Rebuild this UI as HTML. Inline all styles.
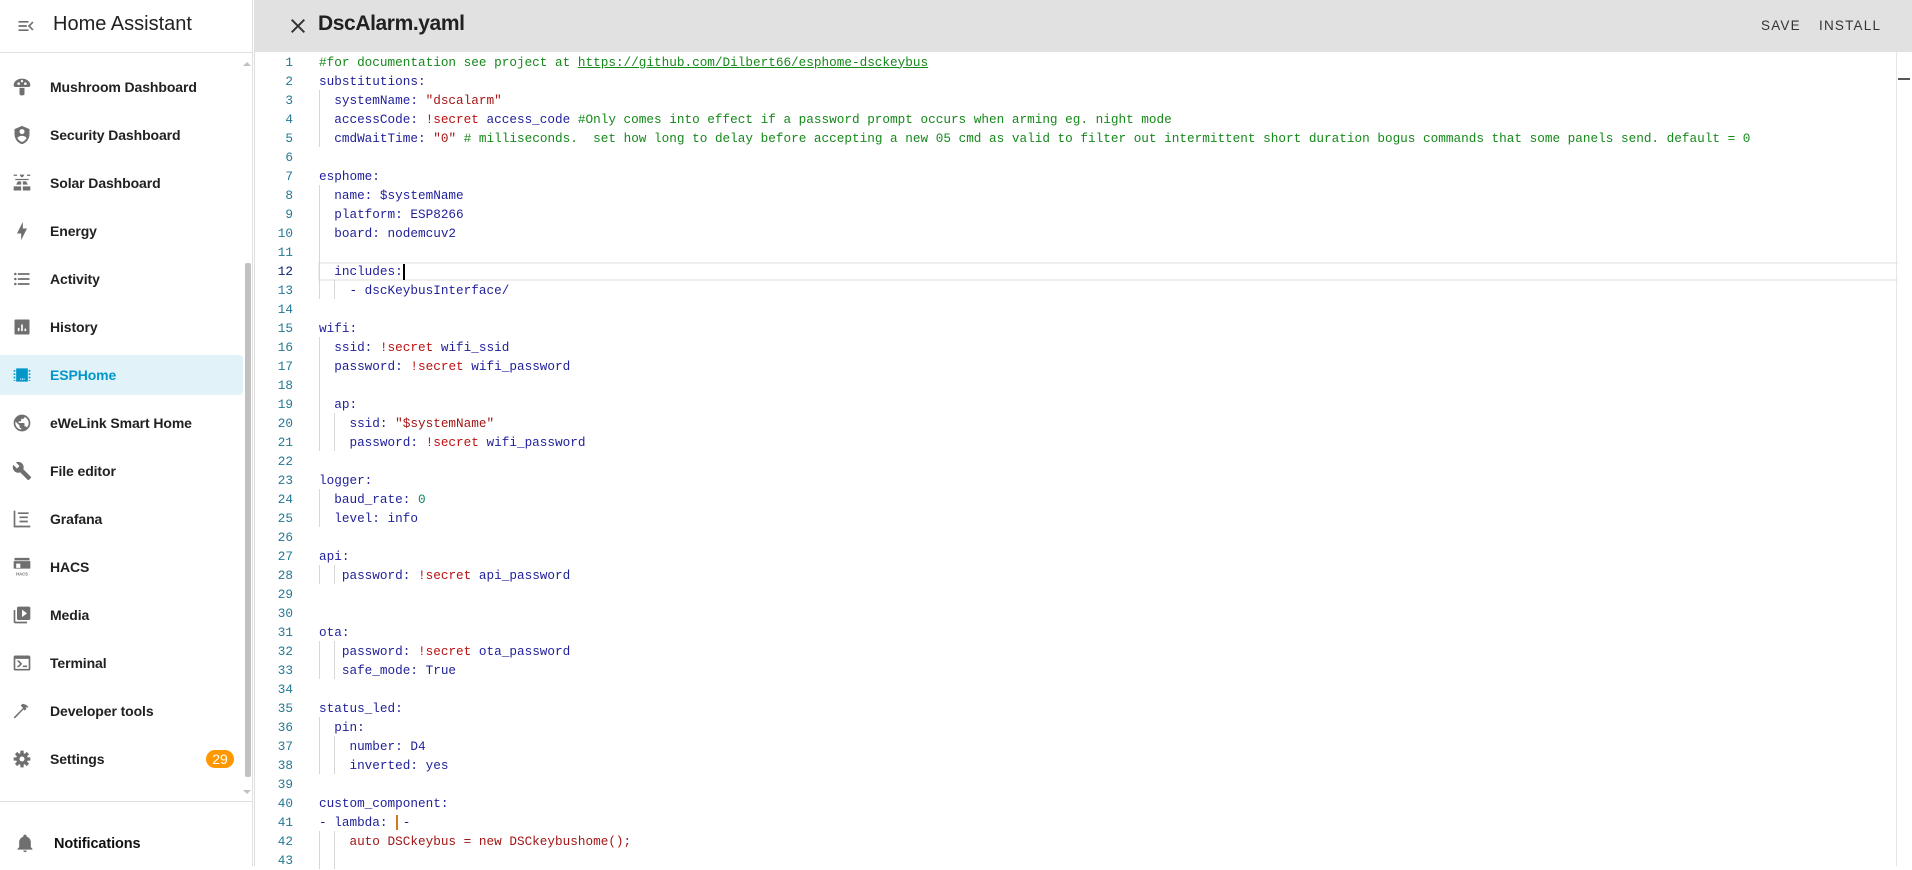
<!DOCTYPE html>
<html><head><meta charset="utf-8"><style>
*{box-sizing:border-box;margin:0;padding:0}
body{width:1912px;height:866px;overflow:hidden;background:#fff;font-family:"Liberation Sans",Arial,sans-serif;position:relative}
#sb{position:absolute;left:0;top:0;width:253px;height:866px;border-right:1px solid #e0e0e0;background:#fff}
#sbh{height:53px;border-bottom:1px solid #e0e0e0;position:relative}
#sbh .t{position:absolute;left:53px;top:13px;font-size:20px;color:#212121}
.it{position:absolute;left:0;width:243px;height:40px;font-size:14px;font-weight:bold;color:#212121}
.it svg{position:absolute;left:12px;top:10px;width:20px;height:20px;fill:#6f6f6f}
.it span{position:absolute;left:50px;top:12px;letter-spacing:-0.1px}
.act{background:#e1f2f8;color:#0397c9;border-radius:0 4px 4px 0}
.act svg{fill:#0397c9}
.badge{position:absolute;left:206px;top:11px;width:28px;height:18px;border-radius:9px;background:#ff9800;color:#fff;font-size:14px;font-weight:normal;text-align:center;line-height:18px}
#hdr{position:absolute;left:254px;top:0;width:1658px;height:52px;background:#e1e1e1}
#hdr .x{position:absolute;left:32px;top:14px;width:24px;height:24px}
#hdr .ti{position:absolute;left:64px;top:12px;font-size:21px;font-weight:bold;color:#212121;letter-spacing:-0.4px}
#hdr .b{position:absolute;top:18px;font-size:13.5px;letter-spacing:1.2px;color:#333;font-weight:500}
#ed{position:absolute;left:254px;top:52px;width:1658px;height:814px;font-family:"Liberation Mono",monospace;font-size:12.7px;border-left:1px solid #ddd}
.ln{position:absolute;left:0;width:284px;height:19px;line-height:19px}
.n{position:absolute;width:40px;text-align:right;color:#237893;left:-2px}
.c{position:absolute;left:64px;white-space:pre;color:#1f1f9a}
.g{position:absolute;width:1px;background:#d6d6d6}
.k{color:#1f1f9a}.s{color:#a31515}.r{color:#b11}.cm{color:#15891a}.nm{color:#098658}
a{color:#15891a;text-decoration:underline}
</style></head><body>
<div id="sb">
 <div id="sbh">
  <svg style="position:absolute;left:16px;top:16px" width="20" height="20" viewBox="0 0 24 24"><path fill="#6f6f6f" d="M3 6h12v2H3zM3 11h10v2H3zM3 16h12v2H3zM21 8l-4 4 4 4-1.4 1.4L14.2 12l5.4-5.4z"/></svg>
  <div class="t">Home Assistant</div>
 </div>
 <div style="position:absolute;left:243px;top:58px;width:0;height:0;border:4px solid transparent;border-bottom-color:#c1c1c1"></div>
 <div style="position:absolute;left:245px;top:263px;width:6px;height:514px;background:#c1c1c1;border-radius:2px"></div>
 <div style="position:absolute;left:243px;top:790px;width:0;height:0;border:4px solid transparent;border-top-color:#c1c1c1"></div>

 <div class="it" style="top:67px"><svg viewBox="0 0 24 24"><path d="M12 2C6.5 2 2 5.5 2 10c0 1.1.9 2 2 2h16c1.1 0 2-.9 2-2 0-4.5-4.5-8-10-8zM9 13h6v7a2 2 0 0 1-2 2h-2a2 2 0 0 1-2-2z"/><circle cx="8" cy="8" r="1.6" fill="#fff"/><circle cx="16" cy="8" r="1.6" fill="#fff"/><circle cx="12" cy="5" r="1.4" fill="#fff"/></svg><span>Mushroom Dashboard</span></div>
 <div class="it" style="top:115px"><svg viewBox="0 0 24 24"><path d="M12 1L3 5v6c0 5.5 3.8 10.7 9 12 5.2-1.3 9-6.5 9-12V5zm0 4a3 3 0 1 1 0 6 3 3 0 0 1 0-6zm0 8c2.5 0 5 1.2 5.5 2.8C16.3 18 14.3 19.7 12 20.4 9.7 19.7 7.7 18 6.5 15.8 7 14.2 9.5 13 12 13z"/></svg><span>Security Dashboard</span></div>
 <div class="it" style="top:163px"><svg viewBox="0 0 24 24"><path d="M2 2h4v1.5H2zM18 2h4v1.5h-4zM9 2h6l-2 3h-2zM4 7h16v1.5H4zM7 10h4v4H5zM13 10h4l2 4h-6zM2 16h9v5H2zM13 16h9v5h-9z"/></svg><span>Solar Dashboard</span></div>
 <div class="it" style="top:211px"><svg viewBox="0 0 24 24"><path d="M11 15H6L13 1V9H18L11 23V15Z"/></svg><span>Energy</span></div>
 <div class="it" style="top:259px"><svg viewBox="0 0 24 24"><path d="M7,5H21V7H7V5M7,13V11H21V13H7M4,4.5A1.5,1.5 0 0,1 5.5,6A1.5,1.5 0 0,1 4,7.5A1.5,1.5 0 0,1 2.5,6A1.5,1.5 0 0,1 4,4.5M4,10.5A1.5,1.5 0 0,1 5.5,12A1.5,1.5 0 0,1 4,13.5A1.5,1.5 0 0,1 2.5,12A1.5,1.5 0 0,1 4,10.5M7,19V17H21V19H7M4,16.5A1.5,1.5 0 0,1 5.5,18A1.5,1.5 0 0,1 4,19.5A1.5,1.5 0 0,1 2.5,18A1.5,1.5 0 0,1 4,16.5Z"/></svg><span>Activity</span></div>
 <div class="it" style="top:307px"><svg viewBox="0 0 24 24"><path d="M4 3h16a1 1 0 0 1 1 1v16a1 1 0 0 1-1 1H4a1 1 0 0 1-1-1V4a1 1 0 0 1 1-1zm3 10v4h2v-4zm4-4v8h2V9zm4 5v3h2v-3z"/></svg><span>History</span></div>
 <div class="it act" style="top:355px"><svg viewBox="0 0 24 24"><path d="M5 4h14v16H5zM2 6h2v2H2zM2 10h2v2H2zM2 14h2v2H2zM2 18h2v1H2zM20 6h2v2h-2zM20 10h2v2h-2zM20 14h2v2h-2zM20 18h2v1h-2z"/><path fill="#e1f2f8" d="M10 16h1v2h-1zM12 16h1v2h-1zM14 16h1v2h-1z"/></svg><span>ESPHome</span></div>
 <div class="it" style="top:403px"><svg viewBox="0 0 24 24"><path d="M12 2a10 10 0 1 0 0 20 10 10 0 0 0 0-20zm-1 17.9A8 8 0 0 1 4.2 10.2L9 15v1a2 2 0 0 0 2 2zm6.9-2.5A2 2 0 0 0 16 16h-1v-3a1 1 0 0 0-1-1H8v-2h2a1 1 0 0 0 1-1V7h2a2 2 0 0 0 2-2v-.4a8 8 0 0 1 2.9 12.8z"/></svg><span>eWeLink Smart Home</span></div>
 <div class="it" style="top:451px"><svg viewBox="0 0 24 24"><path d="M22.7 19l-9.1-9.1c.9-2.3.4-5-1.5-6.9-2-2-5-2.4-7.4-1.3L9 6 6 9 1.6 4.7C.4 7.1.9 10.1 2.9 12.1c1.9 1.9 4.6 2.4 6.9 1.5l9.1 9.1c.4.4 1 .4 1.4 0l2.3-2.3c.5-.4.5-1.1.1-1.4z"/></svg><span>File editor</span></div>
 <div class="it" style="top:499px"><svg viewBox="0 0 24 24"><path d="M2 2h2v18h18v2H2zM7 4h13v2H7zM9 9h10v2H9zM9 14h10v2H9z"/></svg><span>Grafana</span></div>
 <div class="it" style="top:547px"><svg viewBox="0 0 24 24"><path d="M3 1h18v3H3zM2 5h20v9H2zM5 8v5h5V8z"/><text x="12" y="22" font-size="5" text-anchor="middle" fill="#6f6f6f" font-family="Liberation Sans">HACS</text></svg><span>HACS</span></div>
 <div class="it" style="top:595px"><svg viewBox="0 0 24 24"><path d="M4 6H2v14a2 2 0 0 0 2 2h14v-2H4zm16-4H8a2 2 0 0 0-2 2v12a2 2 0 0 0 2 2h12a2 2 0 0 0 2-2V4a2 2 0 0 0-2-2zm-8 12.5v-9l6 4.5z"/></svg><span>Media</span></div>
 <div class="it" style="top:643px"><svg viewBox="0 0 24 24"><path d="M20 19V7H4v12zm0-16a2 2 0 0 1 2 2v14a2 2 0 0 1-2 2H4a2 2 0 0 1-2-2V5a2 2 0 0 1 2-2zm-7 14v-2h5v2zm-3.4-4L5.6 9H8.4l3.3 3.3c.4.4.4 1 0 1.4L8.4 17H5.6z"/></svg><span>Terminal</span></div>
 <div class="it" style="top:691px"><svg viewBox="0 0 24 24"><path d="M2 19.6L13.2 8.4l-2.8-2.8L12.5 3.5c2.5 0 5.5 1.5 7.5 4L16 8l1.4 1.4-2.1 2.1-1.4-1.4L3.4 21z"/></svg><span>Developer tools</span></div>
 <div class="it" style="top:739px"><svg viewBox="0 0 24 24"><circle cx="12" cy="12" r="7"/><g stroke="#6f6f6f" stroke-width="4"><path d="M12 2v20M2 12h20M4.9 4.9l14.2 14.2M19.1 4.9L4.9 19.1"/></g><circle cx="12" cy="12" r="3" fill="#fff"/></svg><span>Settings</span><div class="badge">29</div></div>
 <div style="position:absolute;left:0;top:801px;width:253px;height:1px;background:#e0e0e0"></div>
 <div class="it" style="top:823px"><svg viewBox="0 0 24 24" style="left:15px"><path d="M21,19V20H3V19L5,17V11C5,7.9 7.03,5.17 10,4.29C10,4.19 10,4.1 10,4A2,2 0 0,1 12,2A2,2 0 0,1 14,4C14,4.1 14,4.19 14,4.29C16.97,5.17 19,7.9 19,11V17L21,19M14,21A2,2 0 0,1 12,23A2,2 0 0,1 10,21"/></svg><span style="left:54px;font-size:14.5px;top:13px;color:#111">Notifications</span></div>
</div>

<div id="hdr">
 <svg class="x" viewBox="0 0 24 24"><path fill="#333" d="M19,6.41L17.59,5L12,10.59L6.41,5L5,6.41L10.59,12L5,17.59L6.41,19L12,13.41L17.59,19L19,17.59L13.41,12L19,6.41Z"/></svg>
 <div class="ti">DscAlarm.yaml</div>
 <div class="b" style="left:1507px">SAVE</div>
 <div class="b" style="left:1565px">INSTALL</div>
</div>

<div id="ed">
 <div style="position:absolute;left:63px;top:210px;width:1580px;height:19px;border:2px solid #eee;border-right:none"></div>
 <div style="position:absolute;left:1641px;top:0;width:1px;height:814px;background:#e6e6e6"></div>
 <div style="position:absolute;left:1643px;top:26px;width:12px;height:2px;background:#555"></div>
 <div style="position:absolute;left:148px;top:212px;width:2px;height:16px;background:#000"></div>
 <!-- guides -->
 <div class="g" style="left:64px;top:38px;height:57px"></div>
 <div class="g" style="left:64px;top:133px;height:114px"></div>
 <div class="g" style="left:79px;top:228px;height:19px"></div>
 <div class="g" style="left:64px;top:285px;height:114px"></div>
 <div class="g" style="left:79px;top:361px;height:38px"></div>
 <div class="g" style="left:64px;top:437px;height:38px"></div>
 <div class="g" style="left:64px;top:513px;height:19px"></div>
 <div class="g" style="left:79px;top:513px;height:19px"></div>
 <div class="g" style="left:64px;top:589px;height:38px"></div>
 <div class="g" style="left:79px;top:589px;height:38px"></div>
 <div class="g" style="left:64px;top:665px;height:57px"></div>
 <div class="g" style="left:79px;top:684px;height:38px"></div>
 <div class="g" style="left:64px;top:779px;height:38px"></div>
 <div class="g" style="left:79px;top:779px;height:38px"></div>
 <div style="position:absolute;left:141px;top:763px;width:2px;height:15px;background:#d07a1a"></div>

 <div class="ln" style="top:0.5px"><div class="n">1</div><div class="c cm">#for documentation see project at <a>https://github.com/Dilbert66/esphome-dsckeybus</a></div></div>
 <div class="ln" style="top:19.5px"><div class="n">2</div><div class="c">substitutions:</div></div>
 <div class="ln" style="top:38.5px"><div class="n">3</div><div class="c">  systemName: <span class="s">"dscalarm"</span></div></div>
 <div class="ln" style="top:57.5px"><div class="n">4</div><div class="c">  accessCode: <span class="r">!secret</span> access_code <span class="cm">#Only comes into effect if a password prompt occurs when arming eg. night mode</span></div></div>
 <div class="ln" style="top:76.5px"><div class="n">5</div><div class="c">  cmdWaitTime: <span class="s">"0"</span> <span class="cm"># milliseconds.  set how long to delay before accepting a new 05 cmd as valid to filter out intermittent short duration bogus commands that some panels send. default = 0</span></div></div>
 <div class="ln" style="top:95.5px"><div class="n">6</div></div>
 <div class="ln" style="top:114.5px"><div class="n">7</div><div class="c">esphome:</div></div>
 <div class="ln" style="top:133.5px"><div class="n">8</div><div class="c">  name: $systemName</div></div>
 <div class="ln" style="top:152.5px"><div class="n">9</div><div class="c">  platform: ESP8266</div></div>
 <div class="ln" style="top:171.5px"><div class="n">10</div><div class="c">  board: nodemcuv2</div></div>
 <div class="ln" style="top:190.5px"><div class="n">11</div></div>
 <div class="ln" style="top:209.5px"><div class="n" style="color:#0b216f">12</div><div class="c">  includes:</div></div>
 <div class="ln" style="top:228.5px"><div class="n">13</div><div class="c">    - dscKeybusInterface/</div></div>
 <div class="ln" style="top:247.5px"><div class="n">14</div></div>
 <div class="ln" style="top:266.5px"><div class="n">15</div><div class="c">wifi:</div></div>
 <div class="ln" style="top:285.5px"><div class="n">16</div><div class="c">  ssid: <span class="r">!secret</span> wifi_ssid</div></div>
 <div class="ln" style="top:304.5px"><div class="n">17</div><div class="c">  password: <span class="r">!secret</span> wifi_password</div></div>
 <div class="ln" style="top:323.5px"><div class="n">18</div></div>
 <div class="ln" style="top:342.5px"><div class="n">19</div><div class="c">  ap:</div></div>
 <div class="ln" style="top:361.5px"><div class="n">20</div><div class="c">    ssid: <span class="s">"$systemName"</span></div></div>
 <div class="ln" style="top:380.5px"><div class="n">21</div><div class="c">    password: <span class="r">!secret</span> wifi_password</div></div>
 <div class="ln" style="top:399.5px"><div class="n">22</div></div>
 <div class="ln" style="top:418.5px"><div class="n">23</div><div class="c">logger:</div></div>
 <div class="ln" style="top:437.5px"><div class="n">24</div><div class="c">  baud_rate: <span class="nm">0</span></div></div>
 <div class="ln" style="top:456.5px"><div class="n">25</div><div class="c">  level: info</div></div>
 <div class="ln" style="top:475.5px"><div class="n">26</div></div>
 <div class="ln" style="top:494.5px"><div class="n">27</div><div class="c">api:</div></div>
 <div class="ln" style="top:513.5px"><div class="n">28</div><div class="c">   password: <span class="r">!secret</span> api_password</div></div>
 <div class="ln" style="top:532.5px"><div class="n">29</div></div>
 <div class="ln" style="top:551.5px"><div class="n">30</div></div>
 <div class="ln" style="top:570.5px"><div class="n">31</div><div class="c">ota:</div></div>
 <div class="ln" style="top:589.5px"><div class="n">32</div><div class="c">   password: <span class="r">!secret</span> ota_password</div></div>
 <div class="ln" style="top:608.5px"><div class="n">33</div><div class="c">   safe_mode: True</div></div>
 <div class="ln" style="top:627.5px"><div class="n">34</div></div>
 <div class="ln" style="top:646.5px"><div class="n">35</div><div class="c">status_led:</div></div>
 <div class="ln" style="top:665.5px"><div class="n">36</div><div class="c">  pin:</div></div>
 <div class="ln" style="top:684.5px"><div class="n">37</div><div class="c">    number: D4</div></div>
 <div class="ln" style="top:703.5px"><div class="n">38</div><div class="c">    inverted: yes</div></div>
 <div class="ln" style="top:722.5px"><div class="n">39</div></div>
 <div class="ln" style="top:741.5px"><div class="n">40</div><div class="c">custom_component:</div></div>
 <div class="ln" style="top:760.5px"><div class="n">41</div><div class="c">- lambda:  -</div></div>
 <div class="ln" style="top:779.5px"><div class="n">42</div><div class="c s">    auto DSCkeybus = new DSCkeybushome();</div></div>
 <div class="ln" style="top:798.5px"><div class="n">43</div></div>
</div>
</body></html>
